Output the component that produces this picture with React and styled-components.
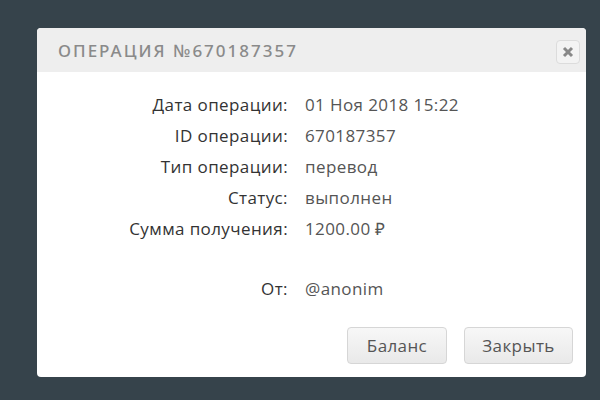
import React from "react";
import styled, { createGlobalStyle } from "styled-components";

const GlobalStyle = createGlobalStyle`
  html, body {
    margin: 0;
    padding: 0;
    background: #36434b;
    font-family: "Open Sans", "Liberation Sans", sans-serif;
  }
`;

const Page = styled.div`
  width: 600px;
  height: 400px;
  padding: 28px 0 0 37px;
  box-sizing: border-box;
`;

const Dialog = styled.div`
  width: 549px;
  height: 349px;
  background: #fff;
  border-radius: 4px;
  overflow: hidden;
  display: flex;
  flex-direction: column;
`;

const Header = styled.div`
  height: 44px;
  background: #eeeeee;
  display: flex;
  align-items: center;
  justify-content: space-between;
  padding: 0 6px 0 21px;
`;

const Title = styled.h1`
  margin: 0;
  font-family: "Noto Sans", "DejaVu Sans", sans-serif;
  font-size: 17px;
  font-weight: 500;
  letter-spacing: 2px;
  color: #8a8a8a;
`;

const CloseButton = styled.button`
  width: 24px;
  height: 24px;
  padding: 0;
  border: 1px solid #dcdcdc;
  border-radius: 4px;
  background: #f3f3f3;
  display: flex;
  align-items: center;
  justify-content: center;
  margin-top: 3px;
`;

const Details = styled.div`
  display: grid;
  grid-template-columns: 251px auto;
  column-gap: 17px;
  grid-auto-rows: 31px;
  padding-top: 17px;
  font-size: 17px;
  letter-spacing: 0.4px;
`;

const Label = styled.div`
  text-align: right;
  color: #333;
  line-height: 31px;
  margin-top: ${(p) => (p.$spaced ? "29px" : "0")};
`;

const Value = styled.div`
  color: #555;
  line-height: 31px;
  margin-top: ${(p) => (p.$spaced ? "29px" : "0")};
`;

const Footer = styled.div`
  margin-top: auto;
  display: flex;
  justify-content: flex-end;
  gap: 17px;
  padding: 0 13px 13px 0;
`;

const Button = styled.button`
  width: ${(p) => p.$width}px;
  height: 37px;
  border: 1px solid #d6d6d6;
  border-radius: 4px;
  background: linear-gradient(#f7f7f7, #e9e9e9);
  font-family: "Open Sans", "Liberation Sans", sans-serif;
  font-size: 17px;
  letter-spacing: 0.4px;
  color: #555;
`;

const rows = [
  ["Дата операции:", "01 Ноя 2018 15:22"],
  ["ID операции:", "670187357"],
  ["Тип операции:", "перевод"],
  ["Статус:", "выполнен"],
  ["Сумма получения:", "1200.00 ₽"],
];

const App = () => (
  <>
    <GlobalStyle />
    <Page>
      <Dialog>
        <Header>
          <Title>ОПЕРАЦИЯ №670187357</Title>
          <CloseButton aria-label="close">
            <svg width="12" height="12" viewBox="0 0 12 12">
              <path d="M2 2 L10 10 M10 2 L2 10" stroke="#888" strokeWidth="3" />
            </svg>
          </CloseButton>
        </Header>
        <Details>
          {rows.map(([label, value]) => (
            <React.Fragment key={label}>
              <Label>{label}</Label>
              <Value>{value}</Value>
            </React.Fragment>
          ))}
          <Label $spaced>От:</Label>
          <Value $spaced>@anonim</Value>
        </Details>
        <Footer>
          <Button $width={100}>Баланс</Button>
          <Button $width={109}>Закрыть</Button>
        </Footer>
      </Dialog>
    </Page>
  </>
);

export default App;
